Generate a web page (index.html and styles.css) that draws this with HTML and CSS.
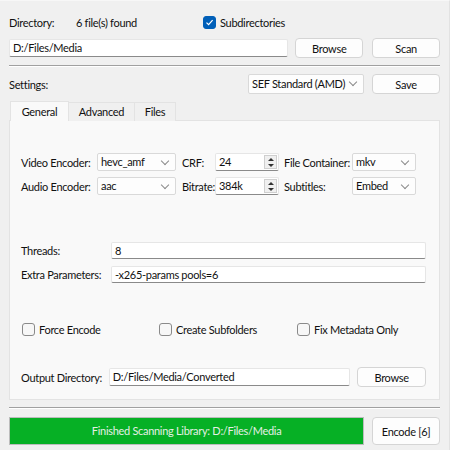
FILE: index.html
```html
<!DOCTYPE html>
<html lang="en">
<head>
  <meta charset="UTF-8">
  <title>Encoder</title>
  <link rel="stylesheet" href="styles.css">
</head>
<body>
  <div class="window">
    <div class="row dir-row">
      <span class="lbl dir-lbl">Directory:</span>
      <span class="found">6 file(s) found</span>
      <label class="check">
        <span class="box checked">
          <svg width="9" height="9" viewBox="0 0 9 9"><path d="M1.5 4.6 L3.6 6.7 L7.6 2.2" fill="none" stroke="#fff" stroke-width="1.2"/></svg>
        </span>
        Subdirectories
      </label>
    </div>

    <div class="row path-row">
      <div class="field path-field">D:/Files/Media</div>
      <button class="btn browse-top">Browse</button>
      <button class="btn">Scan</button>
    </div>

    <div class="sep"></div>

    <div class="row settings-row">
      <span class="lbl">Settings:</span>
      <div class="combo preset">SEF Standard (AMD)<span class="chev"></span></div>
      <button class="btn">Save</button>
    </div>

    <div class="tabs">
      <div class="tab active tab-general">General</div>
      <div class="tab tab-advanced">Advanced</div>
      <div class="tab tab-files">Files</div>
    </div>

    <div class="pane">
      <div class="enc-grid">
        <span class="lbl">Video Encoder:</span>
        <div class="combo">hevc_amf<span class="chev"></span></div>
        <span class="lbl gap-lbl">CRF:</span>
        <div class="spin">24<span class="spin-btns"><i class="up"></i><i class="down"></i></span></div>
        <span class="lbl gap-lbl-sm">File Container:</span>
        <div class="combo">mkv<span class="chev"></span></div>

        <span class="lbl">Audio Encoder:</span>
        <div class="combo">aac<span class="chev"></span></div>
        <span class="lbl gap-lbl">Bitrate:</span>
        <div class="spin">384k<span class="spin-btns"><i class="up"></i><i class="down"></i></span></div>
        <span class="lbl gap-lbl-sm">Subtitles:</span>
        <div class="combo">Embed<span class="chev"></span></div>
      </div>

      <div class="param-rows">
        <div class="row param-row">
          <span class="lbl param-lbl">Threads:</span>
          <div class="field grow">8</div>
        </div>
        <div class="row param-row">
          <span class="lbl param-lbl">Extra Parameters:</span>
          <div class="field grow">-x265-params pools=6</div>
        </div>
      </div>

      <div class="row checks-row">
        <label class="check opt-force"><span class="box"></span>Force Encode</label>
        <label class="check opt-sub"><span class="box"></span>Create Subfolders</label>
        <label class="check"><span class="box"></span>Fix Metadata Only</label>
      </div>

      <div class="row out-row">
        <span class="lbl out-lbl">Output Directory:</span>
        <div class="field out-field">D:/Files/Media/Converted</div>
        <button class="btn">Browse</button>
      </div>
    </div>

    <div class="sep bottom-sep"></div>

    <div class="row status-row">
      <div class="progress">Finished Scanning Library: D:/Files/Media</div>
      <button class="btn encode">Encode [6]</button>
    </div>
  </div>
</body>
</html>
```

FILE: styles.css
```css
* {
  box-sizing: border-box;
}

body {
  margin: 0;
  background-color: #f0f0f0;
  font-family: Lato, "Noto Sans", sans-serif;
  font-size: 11px;
  letter-spacing: -0.3px;
  color: #111111;
}

.window {
  width: 450px;
  height: 450px;
  padding: 12px 9px 0 9px;
  border-top: 1px solid #f7f7f7;
  border-right: 1px solid #e2e2e2;
}

.row {
  display: flex;
  align-items: center;
}

.lbl {
  white-space: nowrap;
}

.dir-row {
  height: 19px;
}

.dir-lbl {
  width: 67px;
}

.found {
  width: 127px;
}

.check {
  display: flex;
  align-items: center;
  gap: 4px;
  white-space: nowrap;
}

.box {
  width: 13px;
  height: 13px;
  border: 1px solid #8a8a8a;
  border-radius: 3px;
  background-color: #f7f7f7;
  display: flex;
  align-items: center;
  justify-content: center;
}

.box.checked {
  background-color: #005fb8;
  border-color: #005fb8;
}

.path-row {
  height: 20px;
  margin-top: 6px;
  gap: 7px;
}

.field {
  height: 18px;
  background-color: #ffffff;
  border: 1px solid #e6e6e6;
  border-bottom-color: #8a8a8a;
  border-radius: 2px;
  padding: 0 3px;
  line-height: 16px;
  white-space: nowrap;
}

.grow {
  flex: 1;
}

.path-field {
  width: 280px;
}

.btn {
  height: 20px;
  width: 68px;
  padding: 0;
  font-family: inherit;
  font-size: 11px;
  letter-spacing: -0.3px;
  color: #111111;
  background-color: #fdfdfd;
  border: 1px solid #d5d5d5;
  border-radius: 4px;
}

.browse-top {
  margin-right: 2px;
}

.sep {
  height: 2px;
  margin-top: 7px;
  border-top: 1px solid #a0a0a0;
  border-bottom: 1px solid #ffffff;
}

.settings-row {
  height: 20px;
  margin-top: 7px;
}

.settings-row .lbl {
  flex: 1;
}

.combo {
  position: relative;
  height: 19px;
  background-color: #fdfdfd;
  border: 1px solid #d9d9d9;
  border-radius: 2px;
  padding: 0 3px;
  line-height: 17px;
  white-space: nowrap;
}

.chev {
  position: absolute;
  right: 7px;
  top: 4px;
  width: 6px;
  height: 6px;
  border-right: 1px solid #8a8a8a;
  border-bottom: 1px solid #8a8a8a;
  transform: rotate(45deg);
}

.preset {
  width: 116px;
  height: 20px;
  line-height: 18px;
  margin-right: 8px;
}

.tabs {
  display: flex;
  margin-top: 7px;
  padding-left: 1px;
  height: 20px;
  position: relative;
  z-index: 1;
}

.tab {
  height: 19px;
  margin-top: 1px;
  border: 1px solid #e3e3e3;
  border-bottom: none;
  background-color: #f0f0f0;
  text-align: center;
  line-height: 17px;
}

.tab.active {
  height: 20px;
  margin-top: 0;
  background-color: #f9f9f9;
  line-height: 19px;
}

.tab-general {
  width: 59px;
}

.tab-advanced {
  width: 66px;
  border-left: none;
}

.tab-files {
  width: 41px;
  border-left: none;
}

.pane {
  height: 280px;
  margin-top: -1px;
  background-color: #f9f9f9;
  border: 1px solid #e3e3e3;
  padding: 32px 13px 0 11px;
}

.enc-grid {
  display: grid;
  grid-template-columns: 76px 79px 39px 64px 73px 64px;
  row-gap: 6px;
  align-items: center;
}

.enc-grid .combo,
.enc-grid .spin {
  height: 18px;
  line-height: 16px;
}

.gap-lbl {
  padding-left: 6px;
}

.gap-lbl-sm {
  padding-left: 5px;
}

.spin {
  position: relative;
  background-color: #ffffff;
  border: 1px solid #e6e6e6;
  border-bottom-color: #8a8a8a;
  border-radius: 2px;
  padding: 0 3px;
  white-space: nowrap;
}

.spin-btns {
  position: absolute;
  right: 1px;
  top: 1px;
  width: 13px;
  height: 14px;
  background-color: #f0f0f0;
  border: 1px solid #cfcfcf;
  display: flex;
  flex-direction: column;
  align-items: center;
  justify-content: space-around;
}

.spin-btns i {
  width: 0;
  height: 0;
  border-left: 3px solid transparent;
  border-right: 3px solid transparent;
}

.spin-btns .up {
  border-bottom: 3px solid #333333;
}

.spin-btns .down {
  border-top: 3px solid #333333;
}

.param-rows {
  margin-top: 47px;
  display: flex;
  flex-direction: column;
  gap: 7px;
}

.param-row {
  height: 17px;
}

.param-row .field {
  height: 17px;
  line-height: 15px;
}

.param-lbl {
  width: 90px;
}

.checks-row {
  margin-top: 39px;
  height: 14px;
  padding-left: 1px;
}

.opt-force {
  width: 137px;
}

.opt-sub {
  width: 138px;
}

.out-row {
  margin-top: 31px;
  height: 20px;
}

.out-lbl {
  width: 88px;
}

.out-field {
  width: 242px;
  margin-right: 7px;
}

.out-row .btn {
  width: 69px;
}

.bottom-sep {
  margin-top: 7px;
}

.status-row {
  margin-top: 8px;
  height: 28px;
  gap: 8px;
}

.progress {
  width: 356px;
  height: 28px;
  background-color: #06b025;
  border: 1px solid #bcbcbc;
  color: #e4efe4;
  text-align: center;
  line-height: 26px;
}

.encode {
  height: 28px;
}
```
